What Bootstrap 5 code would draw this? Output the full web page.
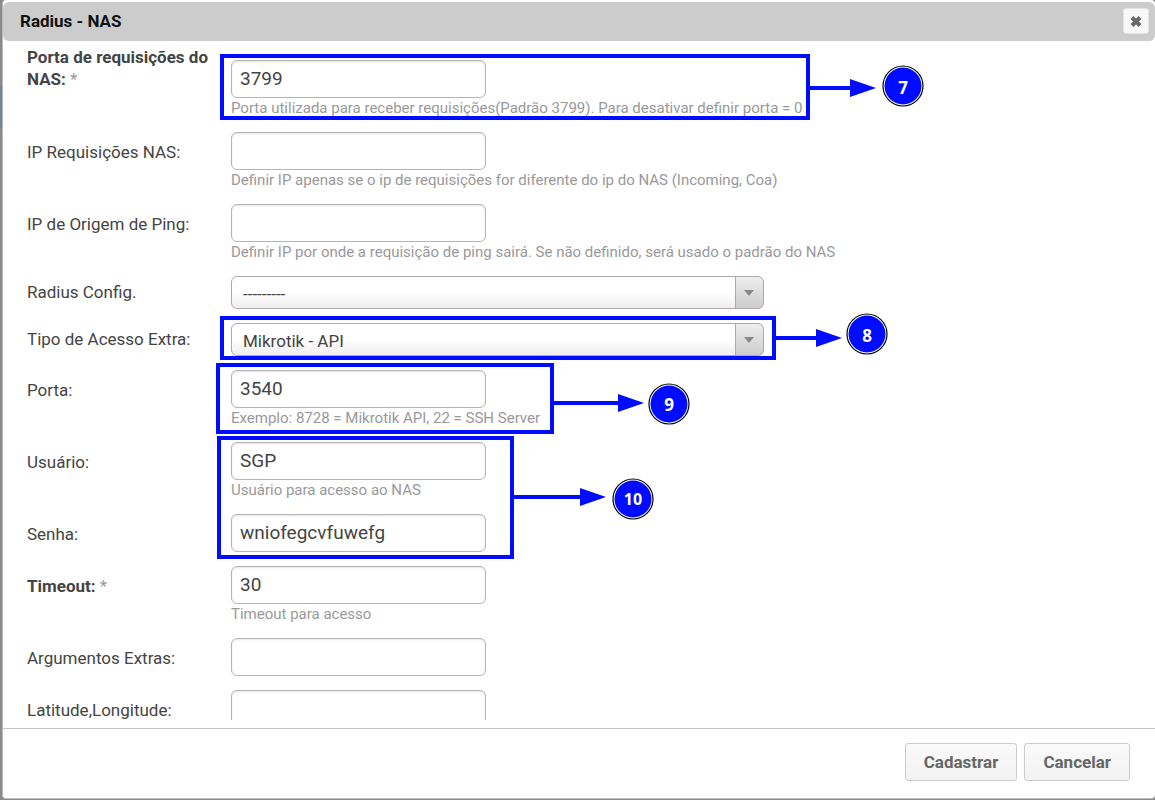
<!DOCTYPE html>
<html lang="pt-BR">
<head>
<meta charset="utf-8">
<meta name="viewport" content="width=device-width, initial-scale=1">
<title>Radius - NAS</title>
<link href="https://cdn.jsdelivr.net/npm/bootstrap@5.3.0/dist/css/bootstrap.min.css" rel="stylesheet">
<style>
  body { font-family: Roboto, sans-serif; font-size: 17px; line-height: 22px; color: #444;
    background: linear-gradient(#8a8a8a, #8a8a8a 85px, #6f8496 85px, #6f8496 128px, #8a8a8a 128px); }
  .dialog { background: #fff; border: 1px solid #bbb; border-width: 0 0 1px 1px; border-radius: 4px;
    margin: 0 0 1px 2px; padding-top: 2px; }
  .dialog-title { background: #ccc; border-radius: 6px; height: 39px; padding: 0 6px 2px 17px; color: #111; }
  .dialog-title h1 { font-size: 17px; line-height: 22px; }
  .close-btn { width: 26px; height: 26px; background: #f8f8f8; border: 1px solid #e4e4e4; border-radius: 3px; }
  .form-area { min-height: 0; padding: 5px 24px 0; overflow: hidden; }
  .field-label { width: 204px; padding-top: 23px; }
  .field-label.two-lines { padding-top: 0; }
  .field-label.select-label { padding-top: 19px; }
  .field-body { padding-top: 14px; }
  .text-field { width: 255px; height: 38px; padding: 0 8px 1px; font-size: 19px; color: #444;
    border: 1px solid #b4b4b4; border-radius: 6px; box-shadow: inset 0 1px 2px #e4e4e4; }
  .select-field { appearance: none; width: 533px; max-width: 100%; height: 33px; padding: 2px 38px 0 11px; font-size: 17px; line-height: 22px; color: #444;
    border: 1px solid #aaa; border-radius: 6px;
    background:
      url("data:image/svg+xml,%3Csvg xmlns='http://www.w3.org/2000/svg' width='10' height='6'%3E%3Cpath d='M0 0h10L5 6z' fill='%23888'/%3E%3C/svg%3E") right 9px center / 10px 6px no-repeat,
      linear-gradient(#eee, #ccc) right / 27px 100% no-repeat,
      linear-gradient(#aaa, #aaa) right 27px top / 1px 100% no-repeat,
      linear-gradient(#fff 50%, #eee); }
  .hint { font-size: 15px; line-height: 20px; color: #999; }
  .req { color: #999; font-weight: 400; }
  .notes { position: absolute; left: 0; top: 0; pointer-events: none; overflow: visible; }
  .notes text { font: 700 17px "Noto Sans", sans-serif; fill: #fff; text-anchor: middle; }
  .notes .two-digits { font-size: 16px; }
  .dialog-footer { border-top: 1px solid #c4c4c4; margin-top: 8px; padding: 14px 25px 17px; gap: 7px; }
  .action { height: 38px; padding: 0 18px; font-size: 17px; font-weight: 700; line-height: 22px; color: #666;
    border: 1px solid #ccc; border-radius: 3px; background: linear-gradient(#fafafa, #f2f2f2); }
</style>
</head>
<body class="vh-100 d-flex flex-column overflow-hidden">
<main class="dialog flex-grow-1 d-flex flex-column overflow-hidden">
  <header class="dialog-title d-flex align-items-center justify-content-between flex-shrink-0">
    <h1 class="fw-bold m-0">Radius - NAS</h1>
    <button type="button" class="close-btn d-flex align-items-center justify-content-center p-0" aria-label="Fechar">
      <svg width="14" height="14" viewBox="0 0 14 14"><path d="M3 3.5l8 8M11 3.5l-8 8" stroke="#6a6a6a" stroke-width="4"/></svg>
    </button>
  </header>

  <form id="nas" class="form-area position-relative flex-grow-1">
    <div class="d-flex">
      <label for="porta-req" class="field-label two-lines flex-shrink-0 fw-bold">Porta de requisições do NAS: <span class="req">*</span></label>
      <div class="field-body"><input id="porta-req" class="text-field d-block" type="text" value="3799"><div class="hint">Porta utilizada para receber requisições(Padrão 3799). Para desativar definir porta = 0</div></div>
    </div>
    <div class="d-flex">
      <label for="ip-req" class="field-label flex-shrink-0">IP Requisições NAS:</label>
      <div class="field-body"><input id="ip-req" class="text-field d-block" type="text"><div class="hint">Definir IP apenas se o ip de requisições for diferente do ip do NAS (Incoming, Coa)</div></div>
    </div>
    <div class="d-flex">
      <label for="ip-ping" class="field-label flex-shrink-0">IP de Origem de Ping:</label>
      <div class="field-body"><input id="ip-ping" class="text-field d-block" type="text"><div class="hint">Definir IP por onde a requisição de ping sairá. Se não definido, será usado o padrão do NAS</div></div>
    </div>
    <div class="d-flex">
      <label for="config" class="field-label select-label flex-shrink-0">Radius Config.</label>
      <div class="field-body"><select id="config" class="select-field d-block"><option>---------</option></select></div>
    </div>
    <div class="d-flex">
      <label for="acesso" class="field-label select-label flex-shrink-0">Tipo de Acesso Extra:</label>
      <div class="field-body"><select id="acesso" class="select-field d-block"><option>Mikrotik - API</option></select></div>
    </div>
    <div class="d-flex">
      <label for="porta" class="field-label flex-shrink-0">Porta:</label>
      <div class="field-body"><input id="porta" class="text-field d-block" type="text" value="3540"><div class="hint">Exemplo: 8728 = Mikrotik API, 22 = SSH Server</div></div>
    </div>
    <div class="d-flex">
      <label for="usuario" class="field-label flex-shrink-0">Usuário:</label>
      <div class="field-body"><input id="usuario" class="text-field d-block" type="text" value="SGP"><div class="hint">Usuário para acesso ao NAS</div></div>
    </div>
    <div class="d-flex">
      <label for="senha" class="field-label flex-shrink-0">Senha:</label>
      <div class="field-body"><input id="senha" class="text-field d-block" type="text" value="wniofegcvfuwefg"></div>
    </div>
    <div class="d-flex">
      <label for="timeout" class="field-label flex-shrink-0 fw-bold">Timeout: <span class="req">*</span></label>
      <div class="field-body"><input id="timeout" class="text-field d-block" type="text" value="30"><div class="hint">Timeout para acesso</div></div>
    </div>
    <div class="d-flex">
      <label for="args" class="field-label flex-shrink-0">Argumentos Extras:</label>
      <div class="field-body"><input id="args" class="text-field d-block" type="text"></div>
    </div>
    <div class="d-flex">
      <label for="latlng" class="field-label flex-shrink-0">Latitude,Longitude:</label>
      <div class="field-body"><input id="latlng" class="text-field d-block" type="text"></div>
    </div>

    <!-- numbered callouts over the fields -->
    <svg class="notes" width="930" height="530" viewBox="3 41 930 530">
      <defs>
        <g id="pin"><circle r="20" fill="#fff" stroke="#000" stroke-width="1.2"/><circle r="18.5" fill="#000cff"/></g>
        <path id="head" d="M-26-9L0 0L-26 9z" fill="#000cff"/>
      </defs>
      <g fill="none" stroke="#000cff" stroke-width="4">
        <rect x="222" y="56" width="586" height="62"/><path d="M810 88h42"/>
        <rect x="222" y="318" width="552" height="40"/><path d="M776 338h42"/>
        <rect x="218" y="365" width="334" height="67"/><path d="M554 403h66"/>
        <rect x="219" y="438" width="293" height="119"/><path d="M514 497h68"/>
      </g>
      <use href="#head" x="876" y="88"/><use href="#head" x="842" y="338"/><use href="#head" x="644" y="403"/><use href="#head" x="606" y="497"/>
      <use href="#pin" x="903" y="86"/><use href="#pin" x="867" y="334"/><use href="#pin" x="669" y="404"/><use href="#pin" x="633" y="499"/>
      <text x="903" y="94">7</text><text x="867" y="342">8</text><text x="669" y="411">9</text><text x="633" y="505" class="two-digits">10</text>
    </svg>
  </form>

  <footer class="dialog-footer d-flex justify-content-end flex-shrink-0">
    <button type="submit" form="nas" class="action">Cadastrar</button>
    <button type="button" class="action">Cancelar</button>
  </footer>
</main>
<script src="https://cdn.jsdelivr.net/npm/bootstrap@5.3.0/dist/js/bootstrap.bundle.min.js"></script>
</body>
</html>
